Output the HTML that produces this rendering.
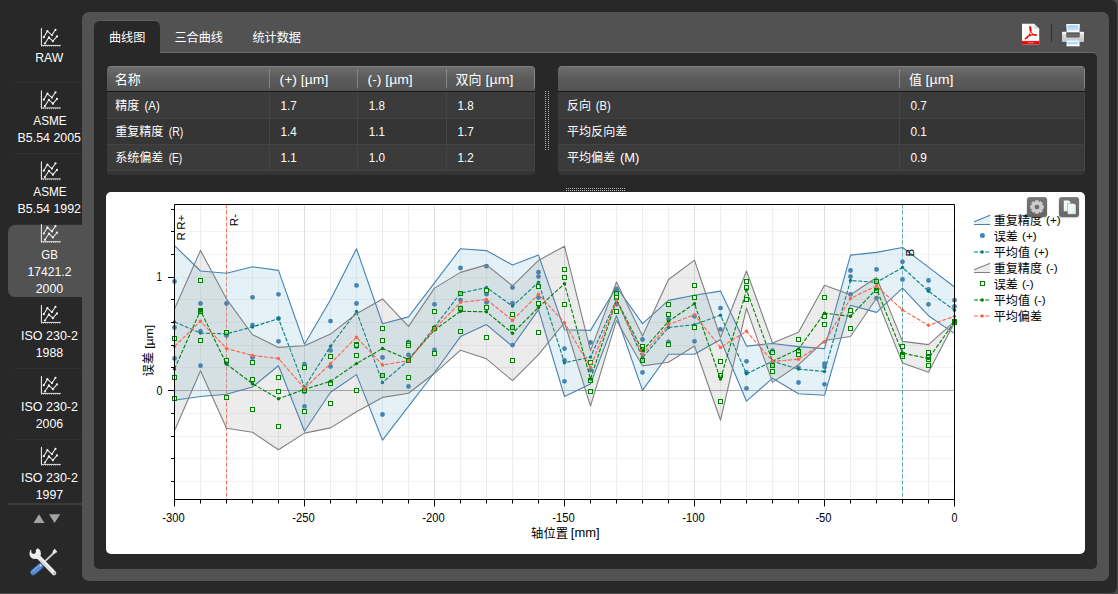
<!DOCTYPE html>
<html lang="zh"><head><meta charset="utf-8"><title>GB 17421.2 2000</title>
<style>
html,body{margin:0;padding:0}
body{width:1118px;height:594px;overflow:hidden;background:#4b4b4b;position:relative;font-family:"Liberation Sans",sans-serif}
div{position:absolute;box-sizing:border-box}
svg{position:absolute;left:0;top:0;overflow:visible}
svg text{font-family:"Liberation Sans","Noto Sans CJK SC",sans-serif}
#win{left:0;top:0;width:1116.8px;height:592.8px;background:#282828;border-radius:0 6px 6px 0}
#outer{left:82px;top:12px;width:1027px;height:569px;background:#525252;border-radius:7px}
#sel{left:8px;top:224.5px;width:80px;height:72.5px;background:#525252;border-radius:7px 0 0 7px}
.sep{left:14px;width:68px;height:1px;background:#303030}
#tab{left:94px;top:20px;width:66px;height:34px;background:#282828;border-radius:6px 6px 0 0;border-top:1px solid #5f5f5f}
#inner{left:94px;top:53px;width:1003px;height:516px;background:#282828;border-radius:0 5px 5px 5px}
#innerhl{left:160px;top:52px;width:934px;height:1px;background:#6a6a6a}
.tbl{top:66px;height:109px;background:#343434;border-radius:4px;overflow:hidden}
.th{left:0;top:0;width:100%;height:25px;background:linear-gradient(#6d6d6d,#5c5c5c 45%,#535353);border-top:1px solid #7e7e7e}
.thl{left:0;top:25px;width:100%;height:1px;background:#161616}
.tr{left:0;width:100%;background:#3b3b3b;border-bottom:1px solid #434343}
.tr.alt{background:#353535}
.cs{top:3px;width:1px;height:19px;background:#868686}
.cv{top:26px;width:1px;height:79px;background:#454545}
#white{left:106px;top:192px;width:979px;height:362px;background:#fff;border-radius:5px}
.btn{top:197px;width:20px;height:20px;border-radius:3px;background:linear-gradient(#727272,#676767);box-shadow:0 1px 2px rgba(0,0,0,.45), inset 0 0 0 1px rgba(0,0,0,.12)}
</style></head><body>
<div id="win"></div>
<div id="outer"></div>
<div class="sep" style="top:82px"></div><div class="sep" style="top:153px"></div><div class="sep" style="top:224px"></div>
<div class="sep" style="top:368px"></div><div class="sep" style="top:439px"></div>
<div class="sep" style="left:8px;width:74px;top:503px;background:#3a3a3a;height:2px"></div>
<div id="sel"></div>
<div id="tab"></div><div id="inner"></div><div id="innerhl"></div>

<div class="tbl" style="left:106.6px;width:428.4px">
 <div class="th"></div><div class="thl"></div>
 <div class="tr" style="top:26px;height:27px"></div><div class="tr alt" style="top:53px;height:26px"></div><div class="tr" style="top:79px;height:26px"></div>
 <div class="cs" style="left:162.4px"></div><div class="cs" style="left:250.4px"></div><div class="cs" style="left:339.4px"></div><div class="cs" style="left:427.4px"></div>
 <div class="cv" style="left:162.4px"></div><div class="cv" style="left:250.4px"></div><div class="cv" style="left:339.4px"></div><div class="cv" style="left:427.4px"></div>
</div>
<div class="tbl" style="left:557.5px;width:527.5px">
 <div class="th"></div><div class="thl"></div>
 <div class="tr" style="top:26px;height:27px"></div><div class="tr alt" style="top:53px;height:26px"></div><div class="tr" style="top:79px;height:26px"></div>
 <div class="cs" style="left:341.5px"></div><div class="cs" style="left:526.5px"></div>
 <div class="cv" style="left:341.5px"></div><div class="cv" style="left:526.5px"></div>
</div>
<div id="white"></div>

<svg width="1118" height="594" viewBox="0 0 1118 594">
<defs><symbol id="ic" viewBox="0 0 21 20"><g fill="none" stroke="#e2e2e2" stroke-width="1">
<path d="M1.5 0.3V19M1.5 17.9H20.8" />
<path d="M0.5 2.5h1M0.5 4.5h1M0.5 6.5h1M0.5 8.5h1M0.5 10.5h1M0.5 12.5h1M0.5 14.5h1M0.5 16.5h1M3.5 18v1.2M5.5 18v1.2M7.5 18v1.2M9.5 18v1.2M11.5 18v1.2M13.5 18v1.2M15.5 18v1.2M17.5 18v1.2M19.5 18v1.2" stroke-width=".8" opacity=".75"/>
<path d="M3.8 9.7L7.4 3.6L11.9 7.6L15.5 2.3M4.9 16L8.9 9.9L12.9 13.7L17 8.9" stroke-width="1.1" stroke-linejoin="round"/></g>
<g fill="#f4f4f4"><circle cx="3.8" cy="9.7" r="1.1"/><circle cx="7.4" cy="3.6" r="1.1"/><circle cx="11.9" cy="7.6" r="1.1"/><circle cx="15.5" cy="2.3" r="1.1"/><circle cx="4.9" cy="16" r="1.1"/><circle cx="8.9" cy="9.9" r="1.1"/><circle cx="12.9" cy="13.7" r="1.1"/><circle cx="17" cy="8.9" r="1.1"/></g></symbol></defs>
<!-- splitter grips -->
<g fill="#b8b8b8"><rect x="545" y="91" width="1" height="1"/><rect x="548" y="91" width="1" height="1"/><rect x="545" y="93" width="1" height="1"/><rect x="548" y="93" width="1" height="1"/><rect x="545" y="95" width="1" height="1"/><rect x="548" y="95" width="1" height="1"/><rect x="545" y="97" width="1" height="1"/><rect x="548" y="97" width="1" height="1"/><rect x="545" y="99" width="1" height="1"/><rect x="548" y="99" width="1" height="1"/><rect x="545" y="101" width="1" height="1"/><rect x="548" y="101" width="1" height="1"/><rect x="545" y="103" width="1" height="1"/><rect x="548" y="103" width="1" height="1"/><rect x="545" y="105" width="1" height="1"/><rect x="548" y="105" width="1" height="1"/><rect x="545" y="107" width="1" height="1"/><rect x="548" y="107" width="1" height="1"/><rect x="545" y="109" width="1" height="1"/><rect x="548" y="109" width="1" height="1"/><rect x="545" y="111" width="1" height="1"/><rect x="548" y="111" width="1" height="1"/><rect x="545" y="113" width="1" height="1"/><rect x="548" y="113" width="1" height="1"/><rect x="545" y="115" width="1" height="1"/><rect x="548" y="115" width="1" height="1"/><rect x="545" y="117" width="1" height="1"/><rect x="548" y="117" width="1" height="1"/><rect x="545" y="119" width="1" height="1"/><rect x="548" y="119" width="1" height="1"/><rect x="545" y="121" width="1" height="1"/><rect x="548" y="121" width="1" height="1"/><rect x="545" y="123" width="1" height="1"/><rect x="548" y="123" width="1" height="1"/><rect x="545" y="125" width="1" height="1"/><rect x="548" y="125" width="1" height="1"/><rect x="545" y="127" width="1" height="1"/><rect x="548" y="127" width="1" height="1"/><rect x="545" y="129" width="1" height="1"/><rect x="548" y="129" width="1" height="1"/><rect x="545" y="131" width="1" height="1"/><rect x="548" y="131" width="1" height="1"/><rect x="545" y="133" width="1" height="1"/><rect x="548" y="133" width="1" height="1"/><rect x="545" y="135" width="1" height="1"/><rect x="548" y="135" width="1" height="1"/><rect x="545" y="137" width="1" height="1"/><rect x="548" y="137" width="1" height="1"/><rect x="545" y="139" width="1" height="1"/><rect x="548" y="139" width="1" height="1"/><rect x="545" y="141" width="1" height="1"/><rect x="548" y="141" width="1" height="1"/><rect x="545" y="143" width="1" height="1"/><rect x="548" y="143" width="1" height="1"/><rect x="545" y="145" width="1" height="1"/><rect x="548" y="145" width="1" height="1"/><rect x="545" y="147" width="1" height="1"/><rect x="548" y="147" width="1" height="1"/><rect x="545" y="149" width="1" height="1"/><rect x="548" y="149" width="1" height="1"/><rect x="566" y="188" width="1" height="1"/><rect x="566" y="190" width="1" height="1"/><rect x="568" y="188" width="1" height="1"/><rect x="568" y="190" width="1" height="1"/><rect x="570" y="188" width="1" height="1"/><rect x="570" y="190" width="1" height="1"/><rect x="572" y="188" width="1" height="1"/><rect x="572" y="190" width="1" height="1"/><rect x="574" y="188" width="1" height="1"/><rect x="574" y="190" width="1" height="1"/><rect x="576" y="188" width="1" height="1"/><rect x="576" y="190" width="1" height="1"/><rect x="578" y="188" width="1" height="1"/><rect x="578" y="190" width="1" height="1"/><rect x="580" y="188" width="1" height="1"/><rect x="580" y="190" width="1" height="1"/><rect x="582" y="188" width="1" height="1"/><rect x="582" y="190" width="1" height="1"/><rect x="584" y="188" width="1" height="1"/><rect x="584" y="190" width="1" height="1"/><rect x="586" y="188" width="1" height="1"/><rect x="586" y="190" width="1" height="1"/><rect x="588" y="188" width="1" height="1"/><rect x="588" y="190" width="1" height="1"/><rect x="590" y="188" width="1" height="1"/><rect x="590" y="190" width="1" height="1"/><rect x="592" y="188" width="1" height="1"/><rect x="592" y="190" width="1" height="1"/><rect x="594" y="188" width="1" height="1"/><rect x="594" y="190" width="1" height="1"/><rect x="596" y="188" width="1" height="1"/><rect x="596" y="190" width="1" height="1"/><rect x="598" y="188" width="1" height="1"/><rect x="598" y="190" width="1" height="1"/><rect x="600" y="188" width="1" height="1"/><rect x="600" y="190" width="1" height="1"/><rect x="602" y="188" width="1" height="1"/><rect x="602" y="190" width="1" height="1"/><rect x="604" y="188" width="1" height="1"/><rect x="604" y="190" width="1" height="1"/><rect x="606" y="188" width="1" height="1"/><rect x="606" y="190" width="1" height="1"/><rect x="608" y="188" width="1" height="1"/><rect x="608" y="190" width="1" height="1"/><rect x="610" y="188" width="1" height="1"/><rect x="610" y="190" width="1" height="1"/><rect x="612" y="188" width="1" height="1"/><rect x="612" y="190" width="1" height="1"/><rect x="614" y="188" width="1" height="1"/><rect x="614" y="190" width="1" height="1"/><rect x="616" y="188" width="1" height="1"/><rect x="616" y="190" width="1" height="1"/><rect x="618" y="188" width="1" height="1"/><rect x="618" y="190" width="1" height="1"/><rect x="620" y="188" width="1" height="1"/><rect x="620" y="190" width="1" height="1"/><rect x="622" y="188" width="1" height="1"/><rect x="622" y="190" width="1" height="1"/><rect x="624" y="188" width="1" height="1"/><rect x="624" y="190" width="1" height="1"/></g>
<!-- sidebar icons -->
<use href="#ic" x="40" y="27.5" width="21" height="20"/>
<use href="#ic" x="40" y="90" width="21" height="20"/>
<use href="#ic" x="40" y="161" width="21" height="20"/>
<svg x="40" y="225" width="21" height="18.8" viewBox="0 1.2 21 18.8"><use href="#ic" x="0" y="0" width="21" height="20"/></svg>
<use href="#ic" x="40" y="304.5" width="21" height="20"/>
<use href="#ic" x="40" y="375.5" width="21" height="20"/>
<use href="#ic" x="40" y="446.5" width="21" height="20"/>
<path d="M33.5 523L39 514.2L44.5 523ZM49 514.2H60.2L54.6 523Z" fill="#a2a2a2"/>
<!-- chart -->
<path d="M174.5 209.5H954.5M174.5 231.5H954.5M174.5 254.5H954.5M174.5 277.5H954.5M174.5 299.5H954.5M174.5 322.5H954.5M174.5 345.5H954.5M174.5 367.5H954.5M174.5 413.5H954.5M174.5 436.5H954.5M174.5 458.5H954.5M174.5 481.5H954.5" stroke="#f2f2f2" stroke-width="1" fill="none"/>
<path d="M200.5 204.5V499.5M226.5 204.5V499.5M252.5 204.5V499.5M278.5 204.5V499.5M330.5 204.5V499.5M356.5 204.5V499.5M382.5 204.5V499.5M408.5 204.5V499.5M460.5 204.5V499.5M486.5 204.5V499.5M512.5 204.5V499.5M538.5 204.5V499.5M590.5 204.5V499.5M616.5 204.5V499.5M642.5 204.5V499.5M668.5 204.5V499.5M720.5 204.5V499.5M746.5 204.5V499.5M772.5 204.5V499.5M798.5 204.5V499.5M850.5 204.5V499.5M876.5 204.5V499.5M902.5 204.5V499.5M928.5 204.5V499.5" stroke="#eeeeee" stroke-width="1" fill="none"/>
<path d="M304.5 204.5V499.5M434.5 204.5V499.5M564.5 204.5V499.5M694.5 204.5V499.5M824.5 204.5V499.5" stroke="#dedede" stroke-width="1" fill="none"/>
<path d="M174.5 390.5H954.5" stroke="#a9a9a9" stroke-width="1" fill="none"/>
<clipPath id="pc"><rect x="174.5" y="204.5" width="780.0" height="295.0"/></clipPath>
<g>
<path d="M226.5 204.5V499.5" stroke="#ff6347" stroke-width="1" stroke-dasharray="4 2" opacity=".85"/>
<path d="M902.5 204.5V499.5" stroke="#008080" stroke-width="1" stroke-dasharray="4 2" opacity=".6"/>
<polygon points="174.5,245.6 200.5,271.0 226.5,273.2 252.5,266.8 278.5,270.4 304.5,344.2 330.5,299.8 356.5,248.7 382.5,323.8 408.5,316.9 434.5,282.9 460.5,248.7 486.5,250.6 512.5,264.9 538.5,255.1 564.5,329.8 590.5,330.4 616.5,287.0 642.5,323.6 668.5,300.4 694.5,295.3 720.5,291.1 746.5,346.1 772.5,343.5 798.5,346.6 824.5,348.6 850.5,255.1 876.5,252.4 902.5,247.5 928.5,267.1 954.5,287.0 954.5,333.6 928.5,315.7 902.5,288.1 876.5,312.4 850.5,305.2 824.5,395.3 798.5,393.7 772.5,378.3 746.5,401.2 720.5,339.5 694.5,354.3 668.5,354.3 642.5,390.4 616.5,315.7 590.5,383.9 564.5,396.5 538.5,309.6 512.5,346.3 486.5,324.6 460.5,336.6 434.5,372.5 408.5,406.4 382.5,440.2 356.5,374.6 330.5,392.3 304.5,431.2 278.5,365.7 252.5,387.0 226.5,394.2 200.5,396.5 174.5,400.2" fill="rgba(150,200,225,0.26)" stroke="none"/>
<polyline points="174.5,245.6 200.5,271.0 226.5,273.2 252.5,266.8 278.5,270.4 304.5,344.2 330.5,299.8 356.5,248.7 382.5,323.8 408.5,316.9 434.5,282.9 460.5,248.7 486.5,250.6 512.5,264.9 538.5,255.1 564.5,329.8 590.5,330.4 616.5,287.0 642.5,323.6 668.5,300.4 694.5,295.3 720.5,291.1 746.5,346.1 772.5,343.5 798.5,346.6 824.5,348.6 850.5,255.1 876.5,252.4 902.5,247.5 928.5,267.1 954.5,287.0" fill="none" stroke="#4682b4" stroke-width="1.1" stroke-linejoin="round"/>
<polyline points="954.5,333.6 928.5,315.7 902.5,288.1 876.5,312.4 850.5,305.2 824.5,395.3 798.5,393.7 772.5,378.3 746.5,401.2 720.5,339.5 694.5,354.3 668.5,354.3 642.5,390.4 616.5,315.7 590.5,383.9 564.5,396.5 538.5,309.6 512.5,346.3 486.5,324.6 460.5,336.6 434.5,372.5 408.5,406.4 382.5,440.2 356.5,374.6 330.5,392.3 304.5,431.2 278.5,365.7 252.5,387.0 226.5,394.2 200.5,396.5 174.5,400.2" fill="none" stroke="#4682b4" stroke-width="1.1" stroke-linejoin="round"/>
<g fill="#4682b4"><circle cx="174.5" cy="281.5" r="2.4"/><circle cx="174.5" cy="327.5" r="2.4"/><circle cx="174.5" cy="358.5" r="2.4"/><circle cx="200.5" cy="303.5" r="2.4"/><circle cx="200.5" cy="331.2" r="2.4"/><circle cx="200.5" cy="365.7" r="2.4"/><circle cx="226.5" cy="303.5" r="2.4"/><circle cx="226.5" cy="335.6" r="2.4"/><circle cx="226.5" cy="363.2" r="2.4"/><circle cx="252.5" cy="297.3" r="2.4"/><circle cx="252.5" cy="325.2" r="2.4"/><circle cx="252.5" cy="357.6" r="2.4"/><circle cx="278.5" cy="294.3" r="2.4"/><circle cx="278.5" cy="318.5" r="2.4"/><circle cx="278.5" cy="341.3" r="2.4"/><circle cx="304.5" cy="364.1" r="2.4"/><circle cx="304.5" cy="391.8" r="2.4"/><circle cx="304.5" cy="406.4" r="2.4"/><circle cx="330.5" cy="321.1" r="2.4"/><circle cx="330.5" cy="350.4" r="2.4"/><circle cx="330.5" cy="366.6" r="2.4"/><circle cx="356.5" cy="285.4" r="2.4"/><circle cx="356.5" cy="303.5" r="2.4"/><circle cx="356.5" cy="346.6" r="2.4"/><circle cx="382.5" cy="357.5" r="2.4"/><circle cx="382.5" cy="375.6" r="2.4"/><circle cx="382.5" cy="414.5" r="2.4"/><circle cx="408.5" cy="342.0" r="2.4"/><circle cx="408.5" cy="355.0" r="2.4"/><circle cx="408.5" cy="386.4" r="2.4"/><circle cx="434.5" cy="304.3" r="2.4"/><circle cx="434.5" cy="328.0" r="2.4"/><circle cx="434.5" cy="349.9" r="2.4"/><circle cx="460.5" cy="268.0" r="2.4"/><circle cx="460.5" cy="300.1" r="2.4"/><circle cx="460.5" cy="308.0" r="2.4"/><circle cx="486.5" cy="266.2" r="2.4"/><circle cx="486.5" cy="294.2" r="2.4"/><circle cx="486.5" cy="302.3" r="2.4"/><circle cx="512.5" cy="287.5" r="2.4"/><circle cx="512.5" cy="303.2" r="2.4"/><circle cx="512.5" cy="327.0" r="2.4"/><circle cx="512.5" cy="345.1" r="2.4"/><circle cx="538.5" cy="272.2" r="2.4"/><circle cx="538.5" cy="276.6" r="2.4"/><circle cx="538.5" cy="297.6" r="2.4"/><circle cx="564.5" cy="348.6" r="2.4"/><circle cx="564.5" cy="360.3" r="2.4"/><circle cx="564.5" cy="381.3" r="2.4"/><circle cx="590.5" cy="342.5" r="2.4"/><circle cx="590.5" cy="370.0" r="2.4"/><circle cx="616.5" cy="289.0" r="2.4"/><circle cx="616.5" cy="292.8" r="2.4"/><circle cx="616.5" cy="304.3" r="2.4"/><circle cx="642.5" cy="339.5" r="2.4"/><circle cx="642.5" cy="359.9" r="2.4"/><circle cx="642.5" cy="372.4" r="2.4"/><circle cx="668.5" cy="319.1" r="2.4"/><circle cx="668.5" cy="342.0" r="2.4"/><circle cx="694.5" cy="316.3" r="2.4"/><circle cx="694.5" cy="341.3" r="2.4"/><circle cx="720.5" cy="308.1" r="2.4"/><circle cx="720.5" cy="329.4" r="2.4"/><circle cx="746.5" cy="361.3" r="2.4"/><circle cx="746.5" cy="372.4" r="2.4"/><circle cx="746.5" cy="388.4" r="2.4"/><circle cx="772.5" cy="350.6" r="2.4"/><circle cx="772.5" cy="365.7" r="2.4"/><circle cx="798.5" cy="367.8" r="2.4"/><circle cx="798.5" cy="382.5" r="2.4"/><circle cx="824.5" cy="363.7" r="2.4"/><circle cx="824.5" cy="366.7" r="2.4"/><circle cx="824.5" cy="384.3" r="2.4"/><circle cx="850.5" cy="270.5" r="2.4"/><circle cx="850.5" cy="276.6" r="2.4"/><circle cx="850.5" cy="294.3" r="2.4"/><circle cx="876.5" cy="269.4" r="2.4"/><circle cx="876.5" cy="281.4" r="2.4"/><circle cx="876.5" cy="298.1" r="2.4"/><circle cx="902.5" cy="261.8" r="2.4"/><circle cx="902.5" cy="279.5" r="2.4"/><circle cx="928.5" cy="280.5" r="2.4"/><circle cx="928.5" cy="289.4" r="2.4"/><circle cx="928.5" cy="304.3" r="2.4"/><circle cx="954.5" cy="300.2" r="2.4"/><circle cx="954.5" cy="306.5" r="2.4"/></g>
<polyline points="174.5,321.9 200.5,333.1 226.5,333.8 252.5,327.0 278.5,318.5 304.5,387.3 330.5,346.3 356.5,311.5 382.5,382.6 408.5,360.3 434.5,327.0 460.5,293.2 486.5,287.5 512.5,306.1 538.5,282.3 564.5,362.7 590.5,357.1 616.5,299.8 642.5,357.6 668.5,327.5 694.5,324.6 720.5,315.2 746.5,373.8 772.5,361.3 798.5,369.1 824.5,371.5 850.5,280.5 876.5,282.3 902.5,267.5 928.5,291.2 954.5,310.3" fill="none" stroke="#008080" stroke-width="1.1" stroke-dasharray="4 1.6"/>
<g fill="#008080"><circle cx="174.5" cy="321.9" r="1.7"/><circle cx="200.5" cy="333.1" r="1.7"/><circle cx="226.5" cy="333.8" r="1.7"/><circle cx="252.5" cy="327.0" r="1.7"/><circle cx="278.5" cy="318.5" r="1.7"/><circle cx="304.5" cy="387.3" r="1.7"/><circle cx="330.5" cy="346.3" r="1.7"/><circle cx="356.5" cy="311.5" r="1.7"/><circle cx="382.5" cy="382.6" r="1.7"/><circle cx="408.5" cy="360.3" r="1.7"/><circle cx="434.5" cy="327.0" r="1.7"/><circle cx="460.5" cy="293.2" r="1.7"/><circle cx="486.5" cy="287.5" r="1.7"/><circle cx="512.5" cy="306.1" r="1.7"/><circle cx="538.5" cy="282.3" r="1.7"/><circle cx="564.5" cy="362.7" r="1.7"/><circle cx="590.5" cy="357.1" r="1.7"/><circle cx="616.5" cy="299.8" r="1.7"/><circle cx="642.5" cy="357.6" r="1.7"/><circle cx="668.5" cy="327.5" r="1.7"/><circle cx="694.5" cy="324.6" r="1.7"/><circle cx="720.5" cy="315.2" r="1.7"/><circle cx="746.5" cy="373.8" r="1.7"/><circle cx="772.5" cy="361.3" r="1.7"/><circle cx="798.5" cy="369.1" r="1.7"/><circle cx="824.5" cy="371.5" r="1.7"/><circle cx="850.5" cy="280.5" r="1.7"/><circle cx="876.5" cy="282.3" r="1.7"/><circle cx="902.5" cy="267.5" r="1.7"/><circle cx="928.5" cy="291.2" r="1.7"/><circle cx="954.5" cy="310.3" r="1.7"/></g>
<polygon points="174.5,309.0 200.5,250.4 226.5,298.9 252.5,334.7 278.5,347.4 304.5,345.7 330.5,334.1 356.5,313.8 382.5,298.9 408.5,326.4 434.5,288.1 460.5,272.4 486.5,264.9 512.5,285.8 538.5,260.4 564.5,246.2 590.5,350.6 616.5,282.0 642.5,336.1 668.5,279.5 694.5,260.1 720.5,337.5 746.5,271.0 772.5,342.9 798.5,332.3 824.5,285.2 850.5,294.7 876.5,277.5 902.5,341.4 928.5,344.6 954.5,321.3 954.5,322.5 928.5,372.3 902.5,363.1 876.5,298.3 850.5,336.5 824.5,340.5 798.5,364.8 772.5,382.4 746.5,308.1 720.5,420.3 694.5,346.0 668.5,362.2 642.5,365.9 616.5,320.4 590.5,406.1 564.5,322.5 538.5,354.6 512.5,380.7 486.5,358.8 460.5,350.2 434.5,373.3 408.5,393.2 382.5,397.4 356.5,411.7 330.5,427.9 304.5,433.1 278.5,449.7 252.5,432.3 226.5,428.3 200.5,370.8 174.5,430.7" fill="rgba(128,128,128,0.15)" stroke="none"/>
<polyline points="174.5,309.0 200.5,250.4 226.5,298.9 252.5,334.7 278.5,347.4 304.5,345.7 330.5,334.1 356.5,313.8 382.5,298.9 408.5,326.4 434.5,288.1 460.5,272.4 486.5,264.9 512.5,285.8 538.5,260.4 564.5,246.2 590.5,350.6 616.5,282.0 642.5,336.1 668.5,279.5 694.5,260.1 720.5,337.5 746.5,271.0 772.5,342.9 798.5,332.3 824.5,285.2 850.5,294.7 876.5,277.5 902.5,341.4 928.5,344.6 954.5,321.3" fill="none" stroke="#808080" stroke-width="1.1" stroke-linejoin="round"/>
<polyline points="954.5,322.5 928.5,372.3 902.5,363.1 876.5,298.3 850.5,336.5 824.5,340.5 798.5,364.8 772.5,382.4 746.5,308.1 720.5,420.3 694.5,346.0 668.5,362.2 642.5,365.9 616.5,320.4 590.5,406.1 564.5,322.5 538.5,354.6 512.5,380.7 486.5,358.8 460.5,350.2 434.5,373.3 408.5,393.2 382.5,397.4 356.5,411.7 330.5,427.9 304.5,433.1 278.5,449.7 252.5,432.3 226.5,428.3 200.5,370.8 174.5,430.7" fill="none" stroke="#808080" stroke-width="1.1" stroke-linejoin="round"/>
<g fill="rgba(255,255,255,0.45)" stroke="#008000" stroke-width="1"><rect x="172.5" y="336.5" width="4" height="4"/><rect x="172.5" y="375.5" width="4" height="4"/><rect x="172.5" y="396.5" width="4" height="4"/><rect x="198.5" y="278.5" width="4" height="4"/><rect x="198.5" y="308.5" width="4" height="4"/><rect x="198.5" y="309.5" width="4" height="4"/><rect x="198.5" y="338.5" width="4" height="4"/><rect x="224.5" y="330.5" width="4" height="4"/><rect x="224.5" y="358.5" width="4" height="4"/><rect x="224.5" y="395.5" width="4" height="4"/><rect x="250.5" y="360.5" width="4" height="4"/><rect x="250.5" y="377.5" width="4" height="4"/><rect x="250.5" y="407.5" width="4" height="4"/><rect x="276.5" y="375.5" width="4" height="4"/><rect x="276.5" y="389.5" width="4" height="4"/><rect x="276.5" y="424.5" width="4" height="4"/><rect x="302.5" y="365.5" width="4" height="4"/><rect x="302.5" y="388.5" width="4" height="4"/><rect x="302.5" y="409.5" width="4" height="4"/><rect x="328.5" y="354.5" width="4" height="4"/><rect x="328.5" y="381.5" width="4" height="4"/><rect x="328.5" y="401.5" width="4" height="4"/><rect x="354.5" y="342.5" width="4" height="4"/><rect x="354.5" y="343.5" width="4" height="4"/><rect x="354.5" y="353.5" width="4" height="4"/><rect x="354.5" y="388.5" width="4" height="4"/><rect x="380.5" y="326.5" width="4" height="4"/><rect x="380.5" y="338.5" width="4" height="4"/><rect x="380.5" y="373.5" width="4" height="4"/><rect x="406.5" y="341.5" width="4" height="4"/><rect x="406.5" y="343.5" width="4" height="4"/><rect x="406.5" y="358.5" width="4" height="4"/><rect x="406.5" y="375.5" width="4" height="4"/><rect x="432.5" y="309.5" width="4" height="4"/><rect x="432.5" y="326.5" width="4" height="4"/><rect x="432.5" y="351.5" width="4" height="4"/><rect x="458.5" y="291.5" width="4" height="4"/><rect x="458.5" y="306.5" width="4" height="4"/><rect x="458.5" y="329.5" width="4" height="4"/><rect x="484.5" y="288.5" width="4" height="4"/><rect x="484.5" y="305.5" width="4" height="4"/><rect x="484.5" y="335.5" width="4" height="4"/><rect x="510.5" y="312.5" width="4" height="4"/><rect x="510.5" y="325.5" width="4" height="4"/><rect x="510.5" y="358.5" width="4" height="4"/><rect x="536.5" y="284.5" width="4" height="4"/><rect x="536.5" y="301.5" width="4" height="4"/><rect x="536.5" y="330.5" width="4" height="4"/><rect x="562.5" y="267.5" width="4" height="4"/><rect x="562.5" y="275.5" width="4" height="4"/><rect x="562.5" y="302.5" width="4" height="4"/><rect x="588.5" y="360.5" width="4" height="4"/><rect x="588.5" y="378.5" width="4" height="4"/><rect x="588.5" y="389.5" width="4" height="4"/><rect x="614.5" y="291.5" width="4" height="4"/><rect x="614.5" y="295.5" width="4" height="4"/><rect x="614.5" y="309.5" width="4" height="4"/><rect x="640.5" y="344.5" width="4" height="4"/><rect x="640.5" y="347.5" width="4" height="4"/><rect x="640.5" y="358.5" width="4" height="4"/><rect x="666.5" y="302.5" width="4" height="4"/><rect x="666.5" y="312.5" width="4" height="4"/><rect x="666.5" y="342.5" width="4" height="4"/><rect x="692.5" y="283.5" width="4" height="4"/><rect x="692.5" y="295.5" width="4" height="4"/><rect x="692.5" y="325.5" width="4" height="4"/><rect x="718.5" y="359.5" width="4" height="4"/><rect x="718.5" y="373.5" width="4" height="4"/><rect x="718.5" y="399.5" width="4" height="4"/><rect x="744.5" y="279.5" width="4" height="4"/><rect x="744.5" y="285.5" width="4" height="4"/><rect x="744.5" y="297.5" width="4" height="4"/><rect x="770.5" y="350.5" width="4" height="4"/><rect x="770.5" y="363.5" width="4" height="4"/><rect x="770.5" y="369.5" width="4" height="4"/><rect x="796.5" y="337.5" width="4" height="4"/><rect x="796.5" y="349.5" width="4" height="4"/><rect x="796.5" y="352.5" width="4" height="4"/><rect x="822.5" y="295.5" width="4" height="4"/><rect x="822.5" y="314.5" width="4" height="4"/><rect x="822.5" y="322.5" width="4" height="4"/><rect x="848.5" y="308.5" width="4" height="4"/><rect x="848.5" y="326.5" width="4" height="4"/><rect x="874.5" y="279.5" width="4" height="4"/><rect x="874.5" y="288.5" width="4" height="4"/><rect x="900.5" y="344.5" width="4" height="4"/><rect x="900.5" y="352.5" width="4" height="4"/><rect x="900.5" y="354.5" width="4" height="4"/><rect x="926.5" y="350.5" width="4" height="4"/><rect x="926.5" y="355.5" width="4" height="4"/><rect x="926.5" y="357.5" width="4" height="4"/><rect x="926.5" y="363.5" width="4" height="4"/><rect x="952.5" y="319.5" width="4" height="4"/><rect x="952.5" y="320.5" width="4" height="4"/></g>
<polyline points="174.5,368.9 200.5,310.5 226.5,364.1 252.5,383.7 278.5,398.8 304.5,389.3 330.5,381.3 356.5,363.6 382.5,348.5 408.5,359.4 434.5,330.0 460.5,311.3 486.5,311.8 512.5,333.3 538.5,307.4 564.5,283.7 590.5,379.1 616.5,299.8 642.5,350.8 668.5,321.3 694.5,303.7 720.5,379.1 746.5,290.0 772.5,361.3 798.5,349.1 824.5,313.2 850.5,316.3 876.5,289.0 902.5,353.0 928.5,358.6 954.5,321.9" fill="none" stroke="#008000" stroke-width="1.1" stroke-dasharray="4 1.6"/>
<g fill="#008000"><circle cx="174.5" cy="368.9" r="1.7"/><circle cx="200.5" cy="310.5" r="1.7"/><circle cx="226.5" cy="364.1" r="1.7"/><circle cx="252.5" cy="383.7" r="1.7"/><circle cx="278.5" cy="398.8" r="1.7"/><circle cx="304.5" cy="389.3" r="1.7"/><circle cx="330.5" cy="381.3" r="1.7"/><circle cx="356.5" cy="363.6" r="1.7"/><circle cx="382.5" cy="348.5" r="1.7"/><circle cx="408.5" cy="359.4" r="1.7"/><circle cx="434.5" cy="330.0" r="1.7"/><circle cx="460.5" cy="311.3" r="1.7"/><circle cx="486.5" cy="311.8" r="1.7"/><circle cx="512.5" cy="333.3" r="1.7"/><circle cx="538.5" cy="307.4" r="1.7"/><circle cx="564.5" cy="283.7" r="1.7"/><circle cx="590.5" cy="379.1" r="1.7"/><circle cx="616.5" cy="299.8" r="1.7"/><circle cx="642.5" cy="350.8" r="1.7"/><circle cx="668.5" cy="321.3" r="1.7"/><circle cx="694.5" cy="303.7" r="1.7"/><circle cx="720.5" cy="379.1" r="1.7"/><circle cx="746.5" cy="290.0" r="1.7"/><circle cx="772.5" cy="361.3" r="1.7"/><circle cx="798.5" cy="349.1" r="1.7"/><circle cx="824.5" cy="313.2" r="1.7"/><circle cx="850.5" cy="316.3" r="1.7"/><circle cx="876.5" cy="289.0" r="1.7"/><circle cx="902.5" cy="353.0" r="1.7"/><circle cx="928.5" cy="358.6" r="1.7"/><circle cx="954.5" cy="321.9" r="1.7"/></g>
<polyline points="174.5,346.4 200.5,321.3 226.5,348.4 252.5,355.5 278.5,358.5 304.5,388.5 330.5,363.6 356.5,337.2 382.5,365.0 408.5,360.7 434.5,328.9 460.5,302.3 486.5,299.5 512.5,320.4 538.5,294.3 564.5,322.8 590.5,367.4 616.5,300.4 642.5,354.6 668.5,324.6 694.5,314.7 720.5,347.4 746.5,331.3 772.5,361.3 798.5,359.3 824.5,342.1 850.5,298.5 876.5,285.8 902.5,310.1 928.5,325.3 954.5,316.3" fill="none" stroke="#ff6347" stroke-width="1.1" stroke-dasharray="4 1.6"/>
<g fill="#ff6347"><circle cx="174.5" cy="346.4" r="1.7"/><circle cx="200.5" cy="321.3" r="1.7"/><circle cx="226.5" cy="348.4" r="1.7"/><circle cx="252.5" cy="355.5" r="1.7"/><circle cx="278.5" cy="358.5" r="1.7"/><circle cx="304.5" cy="388.5" r="1.7"/><circle cx="330.5" cy="363.6" r="1.7"/><circle cx="356.5" cy="337.2" r="1.7"/><circle cx="382.5" cy="365.0" r="1.7"/><circle cx="408.5" cy="360.7" r="1.7"/><circle cx="434.5" cy="328.9" r="1.7"/><circle cx="460.5" cy="302.3" r="1.7"/><circle cx="486.5" cy="299.5" r="1.7"/><circle cx="512.5" cy="320.4" r="1.7"/><circle cx="538.5" cy="294.3" r="1.7"/><circle cx="564.5" cy="322.8" r="1.7"/><circle cx="590.5" cy="367.4" r="1.7"/><circle cx="616.5" cy="300.4" r="1.7"/><circle cx="642.5" cy="354.6" r="1.7"/><circle cx="668.5" cy="324.6" r="1.7"/><circle cx="694.5" cy="314.7" r="1.7"/><circle cx="720.5" cy="347.4" r="1.7"/><circle cx="746.5" cy="331.3" r="1.7"/><circle cx="772.5" cy="361.3" r="1.7"/><circle cx="798.5" cy="359.3" r="1.7"/><circle cx="824.5" cy="342.1" r="1.7"/><circle cx="850.5" cy="298.5" r="1.7"/><circle cx="876.5" cy="285.8" r="1.7"/><circle cx="902.5" cy="310.1" r="1.7"/><circle cx="928.5" cy="325.3" r="1.7"/><circle cx="954.5" cy="316.3" r="1.7"/></g>
</g>
<text transform="translate(185.3 214.8) rotate(-90)" font-size="11.5" fill="#000" text-anchor="end">R+</text>
<text transform="translate(185.3 240.6) rotate(-90)" font-size="11.5" fill="#000" text-anchor="start">R</text>
<text transform="translate(237.5 214.0) rotate(-90)" font-size="11.5" fill="#000" text-anchor="end">R-</text>
<text transform="translate(913.7 248.9) rotate(-90)" font-size="11.5" fill="#000" text-anchor="end">B</text>
<path d="M174.5 204.5H954.5V499.5H174.5ZM174.5 499.5v7.0M200.5 499.5v4.0M226.5 499.5v4.0M252.5 499.5v4.0M278.5 499.5v4.0M304.5 499.5v7.0M330.5 499.5v4.0M356.5 499.5v4.0M382.5 499.5v4.0M408.5 499.5v4.0M434.5 499.5v7.0M460.5 499.5v4.0M486.5 499.5v4.0M512.5 499.5v4.0M538.5 499.5v4.0M564.5 499.5v7.0M590.5 499.5v4.0M616.5 499.5v4.0M642.5 499.5v4.0M668.5 499.5v4.0M694.5 499.5v7.0M720.5 499.5v4.0M746.5 499.5v4.0M772.5 499.5v4.0M798.5 499.5v4.0M824.5 499.5v7.0M850.5 499.5v4.0M876.5 499.5v4.0M902.5 499.5v4.0M928.5 499.5v4.0M954.5 499.5v7.0M174.5 209.5h-3.5M174.5 231.5h-3.5M174.5 254.5h-3.5M174.5 277.5h-6.5M174.5 299.5h-3.5M174.5 322.5h-3.5M174.5 345.5h-3.5M174.5 367.5h-3.5M174.5 390.5h-6.5M174.5 413.5h-3.5M174.5 436.5h-3.5M174.5 458.5h-3.5M174.5 481.5h-3.5" stroke="#000" stroke-width="1" fill="none"/>
<text x="162.30" y="522.00" font-size="12" fill="#000" text-anchor="start" textLength="22.40" lengthAdjust="spacingAndGlyphs">-300</text>
<text x="292.30" y="522.00" font-size="12" fill="#000" text-anchor="start" textLength="22.40" lengthAdjust="spacingAndGlyphs">-250</text>
<text x="422.30" y="522.00" font-size="12" fill="#000" text-anchor="start" textLength="22.40" lengthAdjust="spacingAndGlyphs">-200</text>
<text x="552.30" y="522.00" font-size="12" fill="#000" text-anchor="start" textLength="22.40" lengthAdjust="spacingAndGlyphs">-150</text>
<text x="682.30" y="522.00" font-size="12" fill="#000" text-anchor="start" textLength="22.40" lengthAdjust="spacingAndGlyphs">-100</text>
<text x="815.40" y="522.00" font-size="12" fill="#000" text-anchor="start" textLength="16.20" lengthAdjust="spacingAndGlyphs">-50</text>
<text x="951.50" y="522.00" font-size="12" fill="#000" text-anchor="start" textLength="6.00" lengthAdjust="spacingAndGlyphs">0</text>
<text x="156.60" y="281.40" font-size="12" fill="#000" text-anchor="start" textLength="5.40" lengthAdjust="spacingAndGlyphs">1</text>
<text x="156.40" y="394.80" font-size="12" fill="#000" text-anchor="start" textLength="6.00" lengthAdjust="spacingAndGlyphs">0</text>
<text x="531.10" y="537.80" font-size="12.3" fill="#000" text-anchor="start">轴位置</text>
<text x="570.80" y="537.30" font-size="12" fill="#000" text-anchor="start" textLength="28.80" lengthAdjust="spacingAndGlyphs">[mm]</text>
<g transform="translate(152.8 376.4) rotate(-90)"><text x="-0.20" y="0.00" font-size="12.3" fill="#000" text-anchor="start">误差</text><text x="27.60" y="0.00" font-size="11.5" fill="#000" text-anchor="start" textLength="24.00" lengthAdjust="spacingAndGlyphs">[µm]</text></g>
<polygon points="974.0,224.5 974.0,221.8 990.2,215.2 990.2,224.5" fill="rgba(150,200,225,0.26)"/>
<path d="M974.0 221.8L990.2 215.2M974.0 224.5H990.2" stroke="#4682b4" stroke-width="1.1" fill="none"/>
<text x="993.70" y="224.70" font-size="12.3" fill="#000" text-anchor="start" textLength="48.30" lengthAdjust="spacingAndGlyphs">重复精度</text>
<text x="1046.00" y="224.40" font-size="11.5" fill="#000" text-anchor="start" textLength="14.60" lengthAdjust="spacingAndGlyphs">(+)</text>
<circle cx="982.4" cy="235.6" r="2.5" fill="#4682b4"/>
<text x="993.70" y="240.70" font-size="12.3" fill="#000" text-anchor="start" textLength="24.30" lengthAdjust="spacingAndGlyphs">误差</text>
<text x="1022.00" y="240.40" font-size="11.5" fill="#000" text-anchor="start" textLength="14.60" lengthAdjust="spacingAndGlyphs">(+)</text>
<path d="M974.0 252.0H990.2" stroke="#008080" stroke-width="1.1" stroke-dasharray="4 1.6" fill="none"/>
<circle cx="982.1" cy="252.0" r="1.7" fill="#008080"/>
<text x="993.70" y="256.70" font-size="12.3" fill="#000" text-anchor="start" textLength="36.30" lengthAdjust="spacingAndGlyphs">平均值</text>
<text x="1034.00" y="256.40" font-size="11.5" fill="#000" text-anchor="start" textLength="14.60" lengthAdjust="spacingAndGlyphs">(+)</text>
<polygon points="974.0,272.5 974.0,269.8 990.2,263.2 990.2,272.5" fill="rgba(128,128,128,0.15)"/>
<path d="M974.0 269.8L990.2 263.2M974.0 272.5H990.2" stroke="#808080" stroke-width="1.1" fill="none"/>
<text x="993.70" y="272.70" font-size="12.3" fill="#000" text-anchor="start" textLength="48.30" lengthAdjust="spacingAndGlyphs">重复精度</text>
<text x="1046.00" y="272.40" font-size="11.5" fill="#000" text-anchor="start" textLength="11.60" lengthAdjust="spacingAndGlyphs">(-)</text>
<rect x="980.5" y="281.5" width="4" height="4" fill="none" stroke="#008000"/>
<text x="993.70" y="288.70" font-size="12.3" fill="#000" text-anchor="start" textLength="24.30" lengthAdjust="spacingAndGlyphs">误差</text>
<text x="1022.00" y="288.40" font-size="11.5" fill="#000" text-anchor="start" textLength="11.60" lengthAdjust="spacingAndGlyphs">(-)</text>
<path d="M974.0 300.0H990.2" stroke="#008000" stroke-width="1.1" stroke-dasharray="4 1.6" fill="none"/>
<circle cx="982.1" cy="300.0" r="1.7" fill="#008000"/>
<text x="993.70" y="304.70" font-size="12.3" fill="#000" text-anchor="start" textLength="36.30" lengthAdjust="spacingAndGlyphs">平均值</text>
<text x="1034.00" y="304.40" font-size="11.5" fill="#000" text-anchor="start" textLength="11.60" lengthAdjust="spacingAndGlyphs">(-)</text>
<path d="M974.0 316.0H990.2" stroke="#ff6347" stroke-width="1.1" stroke-dasharray="4 1.6" fill="none"/>
<circle cx="982.1" cy="316.0" r="1.7" fill="#ff6347"/>
<text x="993.70" y="320.70" font-size="12.3" fill="#000" text-anchor="start" textLength="48.30" lengthAdjust="spacingAndGlyphs">平均偏差</text>
<!-- text -->
<text x="35.30" y="62.00" font-size="12.2" fill="#ffffff" text-anchor="start" textLength="28.00" lengthAdjust="spacingAndGlyphs">RAW</text>
<text x="33.30" y="125.20" font-size="12.2" fill="#ffffff" text-anchor="start" textLength="33.40" lengthAdjust="spacingAndGlyphs">ASME</text>
<text x="17.60" y="141.60" font-size="12.2" fill="#ffffff" text-anchor="start" textLength="63.40" lengthAdjust="spacingAndGlyphs">B5.54 2005</text>
<text x="33.30" y="196.20" font-size="12.2" fill="#ffffff" text-anchor="start" textLength="33.40" lengthAdjust="spacingAndGlyphs">ASME</text>
<text x="17.60" y="212.60" font-size="12.2" fill="#ffffff" text-anchor="start" textLength="63.40" lengthAdjust="spacingAndGlyphs">B5.54 1992</text>
<text x="41.25" y="259.30" font-size="12.2" fill="#ffffff" text-anchor="start" textLength="16.50" lengthAdjust="spacingAndGlyphs">GB</text>
<text x="27.50" y="275.80" font-size="12.2" fill="#ffffff" text-anchor="start" textLength="44.00" lengthAdjust="spacingAndGlyphs">17421.2</text>
<text x="35.75" y="292.80" font-size="12.2" fill="#ffffff" text-anchor="start" textLength="27.50" lengthAdjust="spacingAndGlyphs">2000</text>
<text x="21.00" y="340.20" font-size="12.2" fill="#ffffff" text-anchor="start" textLength="57.00" lengthAdjust="spacingAndGlyphs">ISO 230-2</text>
<text x="35.75" y="356.60" font-size="12.2" fill="#ffffff" text-anchor="start" textLength="27.50" lengthAdjust="spacingAndGlyphs">1988</text>
<text x="21.00" y="411.20" font-size="12.2" fill="#ffffff" text-anchor="start" textLength="57.00" lengthAdjust="spacingAndGlyphs">ISO 230-2</text>
<text x="35.75" y="427.60" font-size="12.2" fill="#ffffff" text-anchor="start" textLength="27.50" lengthAdjust="spacingAndGlyphs">2006</text>
<text x="21.00" y="482.20" font-size="12.2" fill="#ffffff" text-anchor="start" textLength="57.00" lengthAdjust="spacingAndGlyphs">ISO 230-2</text>
<text x="35.75" y="498.60" font-size="12.2" fill="#ffffff" text-anchor="start" textLength="27.50" lengthAdjust="spacingAndGlyphs">1997</text>
<text x="108.90" y="41.70" font-size="12.5" fill="#ffffff" text-anchor="start" textLength="36.50" lengthAdjust="spacingAndGlyphs">曲线图</text>
<text x="174.50" y="41.70" font-size="12.5" fill="#ffffff" text-anchor="start" textLength="48.50" lengthAdjust="spacingAndGlyphs">三合曲线</text>
<text x="252.50" y="41.70" font-size="12.5" fill="#ffffff" text-anchor="start" textLength="48.50" lengthAdjust="spacingAndGlyphs">统计数据</text>
<text x="114.80" y="84.00" font-size="13" fill="#ffffff" text-anchor="start" textLength="26.00" lengthAdjust="spacingAndGlyphs">名称</text>
<text x="279.50" y="84.00" font-size="13.5" fill="#ffffff" text-anchor="start" textLength="48.80" lengthAdjust="spacingAndGlyphs">(+) [µm]</text>
<text x="367.60" y="84.00" font-size="13.5" fill="#ffffff" text-anchor="start" textLength="45.00" lengthAdjust="spacingAndGlyphs">(-) [µm]</text>
<text x="455.60" y="84.00" font-size="13" fill="#ffffff" text-anchor="start" textLength="26.00" lengthAdjust="spacingAndGlyphs">双向</text>
<text x="485.60" y="84.00" font-size="13.5" fill="#ffffff" text-anchor="start" textLength="27.80" lengthAdjust="spacingAndGlyphs">[µm]</text>
<text x="909.00" y="84.00" font-size="13" fill="#ffffff" text-anchor="start">值</text>
<text x="925.60" y="84.00" font-size="13.5" fill="#ffffff" text-anchor="start" textLength="27.80" lengthAdjust="spacingAndGlyphs">[µm]</text>
<text x="115.20" y="109.80" font-size="12" fill="#ffffff" text-anchor="start" textLength="24.07" lengthAdjust="spacingAndGlyphs">精度</text>
<text x="144.54" y="110.20" font-size="13.5" fill="#ffffff" text-anchor="start" textLength="15.20" lengthAdjust="spacingAndGlyphs">(A)</text>
<text x="280.60" y="110.20" font-size="13.5" fill="#ffffff" text-anchor="start" textLength="16.20" lengthAdjust="spacingAndGlyphs">1.7</text>
<text x="368.80" y="110.20" font-size="13.5" fill="#ffffff" text-anchor="start" textLength="16.20" lengthAdjust="spacingAndGlyphs">1.8</text>
<text x="457.60" y="110.20" font-size="13.5" fill="#ffffff" text-anchor="start" textLength="16.20" lengthAdjust="spacingAndGlyphs">1.8</text>
<text x="115.20" y="135.80" font-size="12" fill="#ffffff" text-anchor="start" textLength="48.21" lengthAdjust="spacingAndGlyphs">重复精度</text>
<text x="168.68" y="136.20" font-size="13.5" fill="#ffffff" text-anchor="start" textLength="14.60" lengthAdjust="spacingAndGlyphs">(R)</text>
<text x="280.60" y="136.20" font-size="13.5" fill="#ffffff" text-anchor="start" textLength="16.20" lengthAdjust="spacingAndGlyphs">1.4</text>
<text x="368.80" y="136.20" font-size="13.5" fill="#ffffff" text-anchor="start" textLength="16.20" lengthAdjust="spacingAndGlyphs">1.1</text>
<text x="457.60" y="136.20" font-size="13.5" fill="#ffffff" text-anchor="start" textLength="16.20" lengthAdjust="spacingAndGlyphs">1.7</text>
<text x="115.20" y="161.80" font-size="12" fill="#ffffff" text-anchor="start" textLength="48.21" lengthAdjust="spacingAndGlyphs">系统偏差</text>
<text x="168.68" y="162.20" font-size="13.5" fill="#ffffff" text-anchor="start" textLength="13.60" lengthAdjust="spacingAndGlyphs">(E)</text>
<text x="280.60" y="162.20" font-size="13.5" fill="#ffffff" text-anchor="start" textLength="16.20" lengthAdjust="spacingAndGlyphs">1.1</text>
<text x="368.80" y="162.20" font-size="13.5" fill="#ffffff" text-anchor="start" textLength="16.20" lengthAdjust="spacingAndGlyphs">1.0</text>
<text x="457.60" y="162.20" font-size="13.5" fill="#ffffff" text-anchor="start" textLength="16.20" lengthAdjust="spacingAndGlyphs">1.2</text>
<text x="567.00" y="109.80" font-size="12" fill="#ffffff" text-anchor="start" textLength="24.07" lengthAdjust="spacingAndGlyphs">反向</text>
<text x="595.74" y="110.20" font-size="13.5" fill="#ffffff" text-anchor="start" textLength="14.90" lengthAdjust="spacingAndGlyphs">(B)</text>
<text x="910.40" y="110.20" font-size="13.5" fill="#ffffff" text-anchor="start" textLength="16.40" lengthAdjust="spacingAndGlyphs">0.7</text>
<text x="567.00" y="135.80" font-size="12" fill="#ffffff" text-anchor="start" textLength="60.28" lengthAdjust="spacingAndGlyphs">平均反向差</text>
<text x="910.40" y="136.20" font-size="13.5" fill="#ffffff" text-anchor="start" textLength="16.40" lengthAdjust="spacingAndGlyphs">0.1</text>
<text x="567.00" y="161.80" font-size="12" fill="#ffffff" text-anchor="start" textLength="48.21" lengthAdjust="spacingAndGlyphs">平均偏差</text>
<text x="619.88" y="162.20" font-size="13.5" fill="#ffffff" text-anchor="start" textLength="19.40" lengthAdjust="spacingAndGlyphs">(M)</text>
<text x="910.40" y="162.20" font-size="13.5" fill="#ffffff" text-anchor="start" textLength="16.40" lengthAdjust="spacingAndGlyphs">0.9</text>
<defs>
<linearGradient id="gPaper" x1="0" y1="0" x2="0" y2="1"><stop offset="0" stop-color="#9fcbf8"/><stop offset="1" stop-color="#d4e8fc"/></linearGradient>
<linearGradient id="gSlot" x1="0" y1="0" x2="0" y2="1"><stop offset="0" stop-color="#4c4c4c"/><stop offset=".55" stop-color="#707070"/><stop offset="1" stop-color="#5a5a5a"/></linearGradient>
<linearGradient id="gBody" x1="0" y1="0" x2="0" y2="1"><stop offset="0" stop-color="#e6e6e6"/><stop offset="1" stop-color="#c4c4c4"/></linearGradient>
<linearGradient id="gRed" x1="0" y1="0" x2="0" y2="1"><stop offset="0" stop-color="#ff1a1a"/><stop offset="1" stop-color="#c80000"/></linearGradient>
<linearGradient id="gPage" x1="0" y1="0" x2="1" y2="1"><stop offset="0" stop-color="#ffffff"/><stop offset="1" stop-color="#d9ecec"/></linearGradient>
<linearGradient id="gHandle" x1="0" y1="0" x2="1" y2="1"><stop offset="0" stop-color="#7fb0e6"/><stop offset="1" stop-color="#2f66b0"/></linearGradient>
<linearGradient id="gSteel" x1="0" y1="0" x2="1" y2="0"><stop offset="0" stop-color="#f4f4f4"/><stop offset="1" stop-color="#b9b9b9"/></linearGradient>
</defs>
<!-- PDF icon -->
<g>
<path d="M1022 23.7H1034.2L1039.2 28.8V44.4H1022Z" fill="#fdfdfd"/>
<path d="M1034.2 23.7L1039.2 28.8H1034.2Z" fill="#d8d8d8"/>
<rect x="1022" y="40.9" width="17.2" height="3.5" fill="url(#gRed)"/>
<rect x="1027.6" y="42.1" width="6" height="1.2" fill="#ff8d8d" opacity=".7"/>
<path d="M1030.2 26.9C1031.6 29.5 1030.6 33.0 1029.4 35.0C1028.2 37.0 1026.6 38.4 1025.3 38.8M1030.2 26.9C1029.6 29.6 1030.6 32.4 1032.4 34.0C1033.8 35.1 1035.4 35.4 1036.4 35.0M1025.3 38.8C1027.0 36.6 1029.6 35.2 1032.0 34.9C1033.6 34.7 1035.2 34.7 1036.4 35.0" fill="none" stroke="#e8130c" stroke-width="1.35" stroke-linecap="round" stroke-linejoin="round"/>
<circle cx="1030.2" cy="27.4" r="1.15" fill="#e8130c"/>
<circle cx="1030.9" cy="33.2" r=".8" fill="#fff"/>
</g>
<path d="M1051.5 24V42" stroke="#2f2f2f" stroke-width="1"/>
<!-- printer -->
<g>
<rect x="1062" y="31.8" width="22" height="10.2" rx="1" fill="url(#gBody)"/>
<rect x="1062.3" y="32" width="3.8" height="2" fill="#f6f6f6"/><rect x="1079.9" y="32" width="3.8" height="2" fill="#f6f6f6"/>
<rect x="1066.2" y="32.2" width="13.6" height="5.4" rx="1" fill="url(#gSlot)"/>
<rect x="1066.3" y="24" width="13.5" height="8.2" fill="#fdfdfd"/>
<rect x="1067.5" y="25.3" width="10.9" height="5.4" fill="url(#gPaper)"/>
<path d="M1066.5 27.5V32.2M1079.6 27.5V32.2" stroke="#3f7fd0" stroke-width=".6" opacity=".8"/>
<rect x="1066.3" y="40.6" width="13.5" height="5.7" fill="#fdfdfd"/>
<rect x="1067.5" y="41.9" width="10.9" height="2.8" fill="url(#gPaper)"/>
<path d="M1066.5 40.8V46M1079.6 40.8V46" stroke="#3f7fd0" stroke-width=".6" opacity=".8"/>
</g>
<linearGradient id="gBtn" x1="0" y1="0" x2="0" y2="1"><stop offset="0" stop-color="#767676"/><stop offset="1" stop-color="#666666"/></linearGradient>
<g>
<rect x="1026.6" y="197.4" width="20.8" height="20.8" rx="3.2" fill="#000" opacity=".18"/>
<rect x="1058.6" y="197.4" width="20.8" height="20.8" rx="3.2" fill="#000" opacity=".18"/>
<rect x="1027" y="197" width="20" height="20" rx="3" fill="url(#gBtn)"/>
<rect x="1059" y="197" width="20" height="20" rx="3" fill="url(#gBtn)"/>
<path d="M1029.5 197.5H1044.5M1061.5 197.5H1076.5" stroke="#8a8a8a" stroke-width="1" opacity=".6"/>
</g>
<!-- gear -->
<g transform="translate(1037 207)">
<path id="tooth" d="M-1.7 -6.8H1.7L2.2 -3.8H-2.2Z" fill="#cbcbcb"/>
<use href="#tooth" transform="rotate(45)"/><use href="#tooth" transform="rotate(90)"/><use href="#tooth" transform="rotate(135)"/><use href="#tooth" transform="rotate(180)"/><use href="#tooth" transform="rotate(225)"/><use href="#tooth" transform="rotate(270)"/><use href="#tooth" transform="rotate(315)"/>
<circle r="4.9" fill="#cbcbcb"/><circle r="2.3" fill="#6b6b6b"/>
</g>
<!-- copy -->
<g>
<path d="M1063.8 200.4H1068.8L1070.6 202.2V211.2H1063.8Z" fill="url(#gPage)"/>
<path d="M1067.6 203.4H1074.2L1076 205.2V214.2H1067.6Z" fill="url(#gPage)" stroke="#6d6d6d" stroke-width=".4"/>
</g>
<!-- tools -->
<g>
<!-- screwdriver -->
<path d="M40.8 565.2L53.8 553.0" stroke="#cfcfcf" stroke-width="1.8" stroke-linecap="round"/>
<path d="M54.6 548.6L57.4 552.0L53.8 554.0L52.2 552.2Z" fill="#e4e4e4"/>
<path d="M33.3 572.3L40.5 566.2" stroke="#2f62a8" stroke-width="6.0" stroke-linecap="round"/>
<path d="M33.3 572.3L40.5 566.2" stroke="url(#gHandle)" stroke-width="5.0" stroke-linecap="round"/>
<path d="M32.6 571.4L39.4 565.6M34.4 573.4L41.2 567.6" stroke="#a9cdf2" stroke-width=".7" opacity=".55"/>
<circle cx="40.6" cy="565.6" r=".9" fill="#e8e8e8"/>
<!-- wrench -->
<path d="M37.2 555.6L54.0 573.0" stroke="#bdbdbd" stroke-width="4.6" stroke-linecap="round"/>
<path d="M37.2 555.6L54.0 573.0" stroke="#f1f1f1" stroke-width="3.6" stroke-linecap="round"/>
<path d="M40.2 559.8L51.4 571.2" stroke="#c9ccd0" stroke-width="1.1" stroke-linecap="round"/>
<mask id="wm"><rect x="24" y="542" width="24" height="24" fill="#fff"/><path d="M33.6 552.2L28.6 547.2L32.6 543.2L37.4 548.6Z" fill="#000"/><circle cx="33.6" cy="551.6" r="2.4" fill="#000"/></mask>
<circle cx="35.2" cy="553.4" r="5.7" fill="#efefef" mask="url(#wm)"/>
<circle cx="54.1" cy="573.1" r=".8" fill="#666"/>
</g>

</svg>
</body></html>
